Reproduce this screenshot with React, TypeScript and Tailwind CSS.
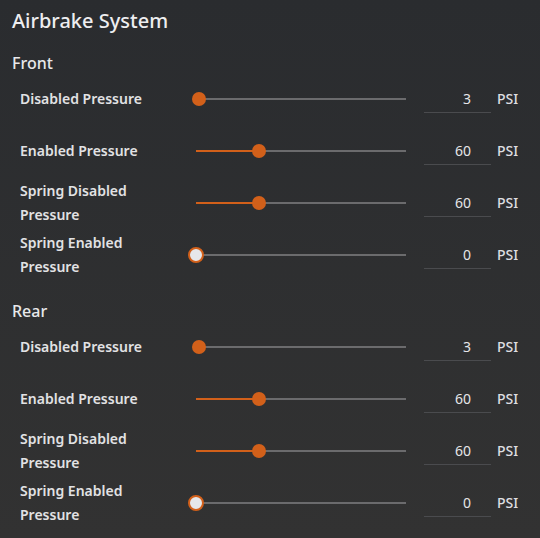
const MAX = 200;

interface RowData {
  label: string;
  value: number;
}

const front: RowData[] = [
  { label: 'Disabled Pressure', value: 3 },
  { label: 'Enabled Pressure', value: 60 },
  { label: 'Spring Disabled Pressure', value: 60 },
  { label: 'Spring Enabled Pressure', value: 0 },
];

const rear: RowData[] = [
  { label: 'Disabled Pressure', value: 3 },
  { label: 'Enabled Pressure', value: 60 },
  { label: 'Spring Disabled Pressure', value: 60 },
  { label: 'Spring Enabled Pressure', value: 0 },
];

function Slider({ value }: { value: number }) {
  const pct = (value / MAX) * 100;
  const empty = value === 0;
  return (
    <div className="relative w-[210px] h-[14px]">
      <div className="absolute left-0 right-0 top-[6px] h-[2px] bg-[#6b6b6d]" />
      <div className="absolute left-0 top-[6px] h-[2px] bg-[#d2601a]" style={{ width: `${pct}%` }} />
      <div
        className={`absolute rounded-full ${
          empty
            ? '-top-px w-[16px] h-[16px] -ml-[8px] bg-[#e6e7ea] border-2 border-[#d2601a]'
            : 'top-0 w-[14px] h-[14px] -ml-[7px] bg-[#d2601a]'
        }`}
        style={{ left: `${pct}%` }}
      />
    </div>
  );
}

function Row({ label, value }: RowData) {
  return (
    <div className="flex items-center h-[48px] pl-5">
      <div className="w-[160px] text-sm font-semibold leading-6 text-[#e2e2e4]">{label}</div>
      <div className="ml-4">
        <Slider value={value} />
      </div>
      <div className="ml-[18px] w-[67px] h-[28px] flex items-center justify-end border-b border-[#4a4b4e] pr-5 text-sm text-[#e6e6e8]">
        {value}
      </div>
      <div className="ml-[6px] text-sm font-medium text-[#dedee0]">PSI</div>
    </div>
  );
}

function Section({ title, rows }: { title: string; rows: RowData[] }) {
  return (
    <div className="flex flex-col">
      <h2 className="pl-3 text-base leading-6 font-medium text-[#e8e8ea]">{title}</h2>
      <div className="flex flex-col gap-1">
        {rows.map((r) => (
          <Row key={r.label} {...r} />
        ))}
      </div>
    </div>
  );
}

export default function App() {
  return (
    <div
      className="min-h-screen w-full bg-linear-to-b from-[#2a2c2f] to-[#323232] pt-[7px]"
      style={{ fontFamily: '"Noto Sans", "Open Sans", sans-serif' }}
    >
      <h1 className="pl-3 text-xl leading-7 font-medium text-[#eeeef0]">Airbrake System</h1>
      <div className="mt-4 flex flex-col gap-5">
        <Section title="Front" rows={front} />
        <Section title="Rear" rows={rear} />
      </div>
    </div>
  );
}
